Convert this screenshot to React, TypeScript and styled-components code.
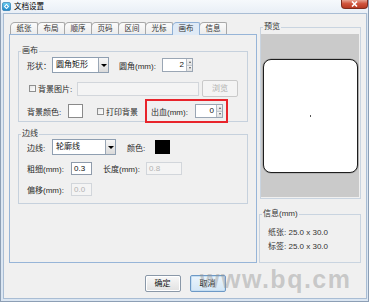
import styled, { createGlobalStyle } from 'styled-components';

const GlobalStyle = createGlobalStyle`
  * { box-sizing: border-box; }
  body {
    margin: 0;
    font-family: "Liberation Sans", "Noto Sans CJK SC", sans-serif;
    font-size: 8px;
    color: #222;
  }
`;

const tabs = ['纸张', '布局', '顺序', '页码', '区间', '光标', '画布', '信息'];

function DownArrow() {
  return <ArrowGlyph />;
}

function Spin({ value, width }: { value: string; width: number }) {
  return (
    <Spinner $w={width}>
      <SpinField>{value}</SpinField>
      <SpinButtons>
        <SpinBtn>
          <TinyTri $up />
        </SpinBtn>
        <SpinBtn>
          <TinyTri />
        </SpinBtn>
      </SpinButtons>
    </Spinner>
  );
}

export default function App() {
  return (
    <>
      <GlobalStyle />
      <Window>
        <TitleBar>
          <TitleIcon viewBox="0 0 9 9" width={9} height={9}>
            <defs>
              <linearGradient id="ic" x1="0" y1="0" x2="0" y2="1">
                <stop offset="0" stopColor="#6fd0f2" />
                <stop offset="1" stopColor="#1b86c9" />
              </linearGradient>
            </defs>
            <rect x="0.5" y="0.5" width="8" height="8" rx="1.5" fill="url(#ic)" stroke="#1a6fa8" strokeWidth="0.6" />
            <path d="M4.5 1.8 L7.2 4.5 L4.5 7.2 L1.8 4.5 Z" fill="#fff" />
            <path d="M4.5 3.3 L5.7 4.5 L4.5 5.7 L3.3 4.5 Z" fill="#2c97d6" />
          </TitleIcon>
          <TitleText>文档设置</TitleText>
          <CloseButton>
            <svg width="7" height="6" viewBox="0 0 7 6">
              <path d="M1 0.5 L6 5.5 M6 0.5 L1 5.5" stroke="#fff" strokeWidth="1.6" />
            </svg>
          </CloseButton>
        </TitleBar>

        <Body>
          <Main>
            <LeftColumn>
              <TabStrip>
                {tabs.map((t) => (
                  <Tab key={t} $active={t === '画布'}>
                    {t}
                  </Tab>
                ))}
              </TabStrip>
              <TabPanel>
                <Group $mt={11}>
                  <Legend>画布</Legend>
                  <Row $mt={1} $h={16}>
                    <Label $w={25}>形状：</Label>
                    <Combo $w={57}>
                      <ComboText>圆角矩形</ComboText>
                      <ComboArrow>
                        <DownArrow />
                      </ComboArrow>
                    </Combo>
                    <Label $w={43} $ml={10}>圆角(mm):</Label>
                    <Spin value="2" width={31} />
                  </Row>
                  <Row $mt={7} $h={17}>
                    <CheckBox $ml={2} />
                    <Label $w={39} $ml={2}>背景图片:</Label>
                    <TextField $w={122} $h={14} $disabled />
                    <FlatButton $ml={3}>浏览</FlatButton>
                  </Row>
                  <Row $mt={6} $h={16}>
                    <Label $w={41}>背景颜色:</Label>
                    <Swatch $color="#fff" />
                    <CheckBox $ml={14} />
                    <Label $w={39} $ml={2}>打印背景</Label>
                    <Highlight>
                      <Label $w={44}>出血(mm):</Label>
                      <Spin value="0" width={28} />
                    </Highlight>
                  </Row>
                </Group>

                <Group $mt={7} $pb={7}>
                  <Legend>边线</Legend>
                  <Row $h={16}>
                    <Label $w={25}>边线:</Label>
                    <Combo $w={64}>
                      <ComboText>轮廓线</ComboText>
                      <ComboArrow>
                        <DownArrow />
                      </ComboArrow>
                    </Combo>
                    <Label $w={28} $ml={11}>颜色:</Label>
                    <Swatch $color="#000" />
                  </Row>
                  <Row $mt={7} $h={13}>
                    <Label $w={44}>粗细(mm):</Label>
                    <TextField $w={21} $h={13}>0.3</TextField>
                    <Label $w={43} $ml={11}>长度(mm):</Label>
                    <TextField $w={36} $h={13} $disabled>0.8</TextField>
                  </Row>
                  <Row $mt={8} $h={13}>
                    <Label $w={44}>偏移(mm):</Label>
                    <TextField $w={21} $h={13} $disabled>0.0</TextField>
                  </Row>
                </Group>
              </TabPanel>
            </LeftColumn>

            <RightColumn>
              <SideGroup $ml={1} $w={101}>
                <Legend>预览</Legend>
                <PreviewArea>
                  <Card>
                    <Dot />
                  </Card>
                </PreviewArea>
              </SideGroup>
              <SideGroup $w={102} $mt={10}>
                <Legend>信息(mm)</Legend>
                <InfoRow $mt={7}>纸张: 25.0 x 30.0</InfoRow>
                <InfoRow>标签: 25.0 x 30.0</InfoRow>
              </SideGroup>
            </RightColumn>
          </Main>

          <Footer>
            <DialogButton>确定</DialogButton>
            <DialogButton $focus>取消</DialogButton>
          </Footer>
        </Body>

        <Watermark>www.bq.cm</Watermark>
      </Window>
    </>
  );
}

const Window = styled.div`
  position: relative;
  display: flex;
  flex-direction: column;
  width: 369px;
  height: 302px;
  overflow: hidden;
  background: #dbe6f2;
  border: 1px solid #8d9fb5;
  border-top: none;
`;

const TitleBar = styled.div`
  display: flex;
  align-items: center;
  height: 13px;
  padding-left: 1px;
  background: linear-gradient(#f6f9fc, #e9eff6);
`;

const TitleIcon = styled.svg`
  display: block;
`;

const TitleText = styled.span`
  margin-left: 3px;
  font-size: 7.5px;
  line-height: 13px;
  color: #000;
`;

const CloseButton = styled.div`
  display: flex;
  align-items: center;
  justify-content: center;
  align-self: flex-start;
  margin-left: auto;
  width: 27px;
  height: 9px;
  background: linear-gradient(#e7a593, #d0553d 45%, #b73a22);
  border: 1px solid #7e2e20;
  border-top: none;
  border-radius: 0 0 4px 4px;
`;

const Body = styled.div`
  flex: 1;
  display: flex;
  flex-direction: column;
  margin: 0 1px 2px 2px;
  background: #f0f0f0;
  border: 1px solid #a9bdd4;
`;

const Main = styled.div`
  display: flex;
  padding: 8px 0 0 5px;
`;

const LeftColumn = styled.div`
  display: flex;
  flex-direction: column;
  width: 248px;
`;

const TabStrip = styled.div`
  display: flex;
  align-items: flex-end;
  height: 12px;
  padding-left: 1px;
`;

const Tab = styled.div<{ $active?: boolean }>`
  position: relative;
  z-index: ${(p) => (p.$active ? 1 : 0)};
  height: ${(p) => (p.$active ? 13 : 12)}px;
  margin-right: -1px;
  margin-bottom: ${(p) => (p.$active ? -1 : 0)}px;
  padding: 0 5.5px;
  font-size: 7.5px;
  line-height: 11px;
  color: #333;
  background: ${(p) => (p.$active ? '#dfeaf6' : 'linear-gradient(#fbfbfb, #ececec)')};
  border: 1px solid ${(p) => (p.$active ? '#8fb0d6' : '#a8a8a8')};
  border-bottom: none;
  border-radius: 5px 2px 0 0;
`;

const TabPanel = styled.div`
  height: 229px;
  padding: 0 8px;
  background: #f0f0f0;
  border: 1px solid #97b5d8;
`;

const Group = styled.fieldset<{ $mt?: number; $pb?: number }>`
  margin: ${(p) => p.$mt ?? 0}px 0 0;
  padding: 0 0 ${(p) => p.$pb ?? 2}px;
  min-width: 0;
  border: 1px solid #c6d1dd;
`;

const Legend = styled.legend`
  margin-left: 2px;
  padding: 0 1px;
  height: 10px;
  font-size: 8px;
  line-height: 10px;
  color: #333;
`;

const Row = styled.div<{ $mt?: number; $h: number }>`
  display: flex;
  align-items: center;
  height: ${(p) => p.$h}px;
  margin-top: ${(p) => p.$mt ?? 0}px;
  padding-left: 8px;
`;

const Label = styled.span<{ $w: number; $ml?: number }>`
  flex: none;
  width: ${(p) => p.$w}px;
  margin-left: ${(p) => p.$ml ?? 0}px;
  font-size: 8px;
  white-space: nowrap;
  color: #2a2a2a;
`;

const Combo = styled.div<{ $w: number }>`
  display: flex;
  width: ${(p) => p.$w}px;
  height: 16px;
  background: #fff;
  border: 1px solid #8f9fb1;
`;

const ComboText = styled.span`
  flex: 1;
  padding-left: 3px;
  font-size: 8px;
  line-height: 14px;
  color: #111;
`;

const ComboArrow = styled.span`
  display: flex;
  align-items: center;
  justify-content: center;
  width: 10px;
  background: linear-gradient(#f7f7f7, #dadada);
  border-left: 1px solid #9aa7b6;
`;

const ArrowGlyph = styled.span`
  width: 0;
  height: 0;
  border-left: 3px solid transparent;
  border-right: 3px solid transparent;
  border-top: 3px solid #000;
`;

const Spinner = styled.div<{ $w: number }>`
  display: flex;
  width: ${(p) => p.$w}px;
  height: 14px;
  background: #fff;
  border: 1px solid #9aa6b4;
`;

const SpinField = styled.span`
  flex: 1;
  padding-right: 2px;
  text-align: right;
  font-size: 8px;
  line-height: 12px;
  color: #111;
`;

const SpinButtons = styled.span`
  display: flex;
  flex-direction: column;
  width: 6px;
  border-left: 1px solid #b5bcc5;
`;

const SpinBtn = styled.span`
  flex: 1;
  display: flex;
  align-items: center;
  justify-content: center;
  background: linear-gradient(#f6f6f6, #e0e0e0);
  & + & {
    border-top: 1px solid #c2c8cf;
  }
`;

const TinyTri = styled.span<{ $up?: boolean }>`
  width: 0;
  height: 0;
  border-left: 1.5px solid transparent;
  border-right: 1.5px solid transparent;
  ${(p) => (p.$up ? 'border-bottom: 2px solid #555;' : 'border-top: 2px solid #555;')}
`;

const TextField = styled.div<{ $w: number; $h: number; $disabled?: boolean }>`
  flex: none;
  width: ${(p) => p.$w}px;
  height: ${(p) => p.$h}px;
  padding-left: 2px;
  font-size: 8px;
  line-height: ${(p) => p.$h - 2}px;
  color: ${(p) => (p.$disabled ? '#b2b2b2' : '#111')};
  background: ${(p) => (p.$disabled ? '#f4f4f4' : '#fff')};
  border: 1px solid ${(p) => (p.$disabled ? '#d2d6db' : '#8f9bab')};
`;

const FlatButton = styled.div<{ $ml?: number }>`
  flex: none;
  width: 36px;
  height: 17px;
  margin-left: ${(p) => p.$ml ?? 0}px;
  font-size: 8px;
  line-height: 15px;
  text-align: center;
  color: #b0b0b0;
  background: #f4f4f4;
  border: 1px solid #c9c9c9;
  border-radius: 2px;
`;

const CheckBox = styled.span<{ $ml?: number }>`
  flex: none;
  width: 7px;
  height: 7px;
  margin-left: ${(p) => p.$ml ?? 0}px;
  background: linear-gradient(135deg, #e6e6e6, #ffffff);
  border: 1px solid #8e8f8f;
`;

const Swatch = styled.span<{ $color: string }>`
  flex: none;
  width: 15px;
  height: 14px;
  background: ${(p) => p.$color};
  border: 1px solid ${(p) => (p.$color === '#000' ? '#000' : '#8a8a8a')};
`;

const Highlight = styled.div`
  display: flex;
  align-items: center;
  flex: none;
  height: 24px;
  margin: -4px 0;
  padding: 0 3px 0 4px;
  border: 2px solid #e8242b;
`;

const RightColumn = styled.div`
  display: flex;
  flex-direction: column;
  margin-left: 2px;
`;

const SideGroup = styled.fieldset<{ $w: number; $ml?: number; $mt?: number }>`
  width: ${(p) => p.$w}px;
  margin: ${(p) => p.$mt ?? 0}px 0 0 ${(p) => p.$ml ?? 0}px;
  padding: 0 1px 1px 0;
  min-width: 0;
  border: 1px solid #c9d4e0;
  &:last-child {
    padding-bottom: 8px;
  }
`;

const PreviewArea = styled.div`
  display: flex;
  align-items: center;
  height: 163px;
  margin-top: 2px;
  padding: 0 1px 0 2px;
  background: #cacaca;
`;

const Card = styled.div`
  display: flex;
  align-items: center;
  justify-content: center;
  flex: 1;
  height: 114px;
  background: #fff;
  border: 1.5px solid #1e1e1e;
  border-radius: 8px;
  box-shadow: 0 0 0 0.6px #9a9a9a;
`;

const Dot = styled.span`
  width: 1px;
  height: 2px;
  background: #555;
`;

const InfoRow = styled.div<{ $mt?: number }>`
  height: 14px;
  margin-top: ${(p) => p.$mt ?? 0}px;
  padding-left: 8px;
  font-size: 8px;
  line-height: 14px;
  color: #333;
`;

const Footer = styled.div`
  display: flex;
  justify-content: center;
  gap: 9px;
  margin-top: 12px;
`;

const DialogButton = styled.div<{ $focus?: boolean }>`
  width: 36px;
  height: 17px;
  font-size: 8px;
  line-height: 15px;
  text-align: center;
  color: #111;
  background: ${(p) => (p.$focus ? 'linear-gradient(#eaf4fc, #d3e6f6)' : 'linear-gradient(#f8f8f8, #e2e2e2)')};
  border: 1px solid ${(p) => (p.$focus ? '#6d99c6' : '#8a98a8')};
  border-radius: 2px;
  box-shadow: inset 0 0 0 1px ${(p) => (p.$focus ? '#c5def2' : '#ffffff')};
`;

const Watermark = styled.div`
  position: absolute;
  left: 199px;
  top: 267px;
  font-family: "Liberation Sans", sans-serif;
  font-size: 25px;
  font-weight: bold;
  line-height: 25px;
  letter-spacing: 1.5px;
  color: rgba(150, 150, 150, 0.45);
  pointer-events: none;
`;
